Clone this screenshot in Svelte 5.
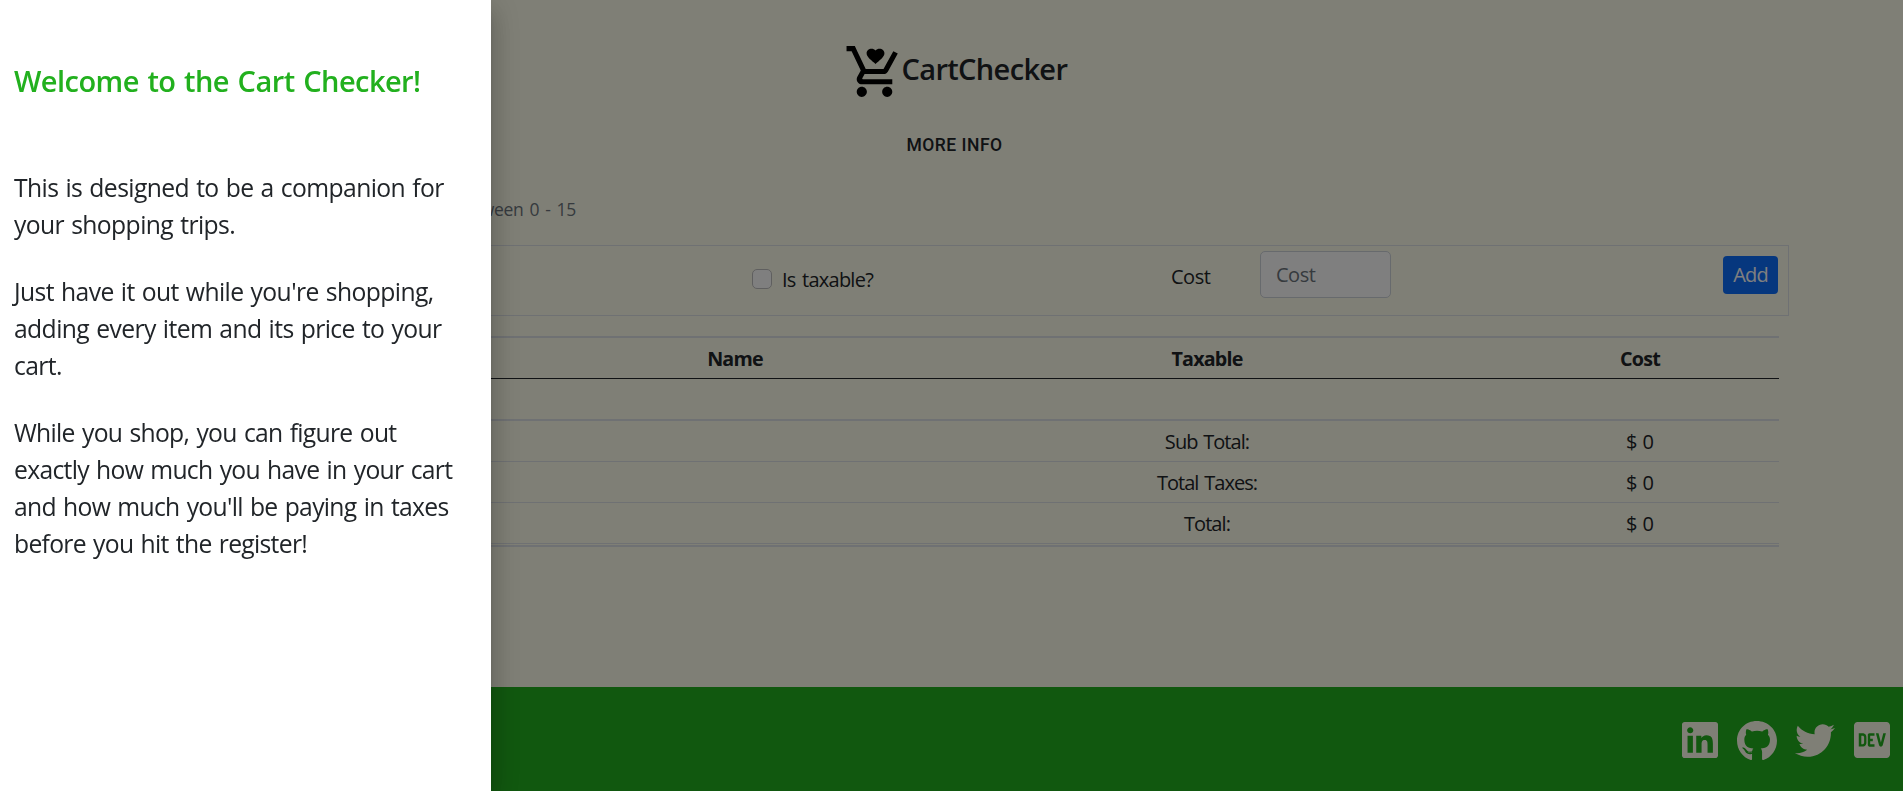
<script>
  const totals = [
    { label: 'Sub Total:', value: '$ 0' },
    { label: 'Total Taxes:', value: '$ 0' },
    { label: 'Total:', value: '$ 0' }
  ];
</script>

<div class="page">
  <header>
    <div class="brand">
      <svg class="cart" viewBox="0 0 24 24"><path d="M7 18c-1.1 0-1.99.9-1.99 2S5.9 22 7 22s2-.9 2-2-.9-2-2-2zm10 0c-1.1 0-1.99.9-1.99 2s.89 2 1.99 2 2-.9 2-2-.9-2-2-2zm-9.83-3.25l.03-.12.9-1.63h7.45c.75 0 1.41-.41 1.75-1.03l3.86-7.01L19.42 4h-.01l-1.1 2-2.76 5H8.53l-.13-.27L6.16 6l-.95-2-.94-2H1v2h2l3.6 7.59-1.35 2.45c-.16.28-.25.61-.25.96 0 1.1.9 2 2 2h12v-2H7.42c-.13 0-.25-.11-.25-.25z" /><path transform="translate(8.2 2.07) scale(.35 .325)" d="M12 21.35l-1.45-1.32C5.4 15.36 2 12.28 2 8.5 2 5.42 4.42 3 7.5 3c1.74 0 3.41.81 4.5 2.09C13.09 3.81 14.76 3 16.5 3 19.58 3 22 5.42 22 8.5c0 3.78-3.4 6.86-8.55 11.54L12 21.35z" /></svg>
      <span class="name">CartChecker</span>
    </div>
    <button class="more">MORE INFO</button>
  </header>
  <p class="hint">between 0 - 15</p>

  <form class="entry">
    <label class="check"><input type="checkbox" /><span>Is taxable?</span></label>
    <label class="costlabel" for="cost">Cost</label>
    <input id="cost" class="cost" placeholder="Cost" />
    <button class="add" type="button">Add</button>
  </form>

  <div class="table">
    <div class="row head"><span></span><b>Name</b><b>Taxable</b><b>Cost</b></div>
    <div class="row blank"></div>
    {#each totals as t}
      <div class="row"><span></span><span></span><span class="label">{t.label}</span><span>{t.value}</span></div>
    {/each}
  </div>

  <footer>
    <svg class="sq" viewBox="0 32 448 448"><path d="M416 32H31.9C14.3 32 0 46.5 0 64.3v383.4C0 465.5 14.3 480 31.9 480H416c17.6 0 32-14.5 32-32.3V64.3c0-17.8-14.4-32.3-32-32.3zM135.4 416H69V202.2h66.5V416zm-33.2-243c-21.3 0-38.5-17.3-38.5-38.5S80.9 96 102.2 96c21.2 0 38.5 17.3 38.5 38.5 0 21.3-17.2 38.5-38.5 38.5zm282.1 243h-66.4V312c0-24.8-.5-56.7-34.5-56.7-34.6 0-39.9 27-39.9 54.9V416h-66.4V202.2h63.7v29.2h.9c8.9-16.8 30.6-34.5 62.9-34.5 67.2 0 79.7 44.3 79.7 101.9V416z" /></svg>
    <svg class="gh" viewBox="0 8 496 484"><path d="M165.9 397.4c0 2-2.3 3.6-5.2 3.6-3.3.3-5.6-1.3-5.6-3.6 0-2 2.3-3.6 5.2-3.6 3-.3 5.6 1.3 5.6 3.6zm-31.1-4.5c-.7 2 1.3 4.3 4.3 4.9 2.6 1 5.6 0 6.2-2s-1.3-4.3-4.3-5.2c-2.6-.7-5.5.3-6.2 2.3zm44.2-1.7c-2.9.7-4.9 2.6-4.6 4.9.3 2 2.9 3.3 5.9 2.6 2.9-.7 4.9-2.6 4.6-4.6-.3-1.9-3-3.2-5.9-2.9zM244.8 8C106.1 8 0 113.3 0 252c0 110.9 69.8 205.8 169.5 239.2 12.8 2.3 17.3-5.6 17.3-12.1 0-6.2-.3-40.4-.3-61.4 0 0-70 15-84.7-29.8 0 0-11.4-29.1-27.8-36.6 0 0-22.9-15.7 1.6-15.4 0 0 24.9 2 38.6 25.8 21.9 38.6 58.6 27.5 72.9 20.9 2.3-16 8.8-27.1 16-33.7-55.9-6.2-112.3-14.3-112.3-110.5 0-27.5 7.6-41.3 23.6-58.9-2.6-6.5-11.1-33.3 2.6-67.9 20.9-6.5 69 27 69 27 20-5.6 41.5-8.5 62.8-8.5s42.8 2.9 62.8 8.5c0 0 48.1-33.6 69-27 13.7 34.7 5.2 61.4 2.6 67.9 16 17.7 25.8 31.5 25.8 58.9 0 96.5-58.9 104.2-114.8 110.5 9.2 7.9 17 22.9 17 46.4 0 33.7-.3 75.4-.3 83.6 0 6.5 4.6 14.4 17.3 12.1C428.2 457.8 496 362.9 496 252 496 113.3 383.5 8 244.8 8z" /></svg>
    <svg class="tw" viewBox="0 48 512 416"><path d="M459.37 151.716c.325 4.548.325 9.097.325 13.645 0 138.72-105.583 298.558-298.558 298.558-59.452 0-114.68-17.219-161.137-47.106 8.447.974 16.568 1.299 25.34 1.299 49.055 0 94.213-16.568 130.274-44.832-46.132-.975-84.792-31.188-98.112-72.772 6.498.974 12.995 1.624 19.818 1.624 9.421 0 18.843-1.3 27.614-3.573-48.081-9.747-84.143-51.98-84.143-102.985v-1.299c13.969 7.797 30.214 12.67 47.431 13.319-28.264-18.843-46.781-51.005-46.781-87.391 0-19.492 5.197-37.36 14.294-52.954 51.655 63.675 129.3 105.258 216.365 109.807-1.624-7.797-2.599-15.918-2.599-24.04 0-57.828 46.782-104.934 104.934-104.934 30.213 0 57.502 12.67 76.67 33.137 23.715-4.548 46.456-13.32 66.599-25.34-7.798 24.366-24.366 44.833-46.132 57.827 21.117-2.273 41.584-8.122 60.426-16.243-14.292 20.791-32.161 39.308-52.628 54.253z" /></svg>
    <svg class="sq" viewBox="0 32 448 448"><path d="M120.12 208.29c-3.88-2.9-7.77-4.35-11.65-4.35H91.03v104.47h17.45c3.88 0 7.77-1.45 11.65-4.35 3.88-2.9 5.82-7.25 5.82-13.06v-69.65c-.01-5.8-1.96-10.16-5.83-13.06zM404.1 32H43.9C19.7 32 .06 51.59 0 75.8v360.4C.06 460.41 19.7 480 43.9 480h360.2c24.21 0 43.84-19.59 43.9-43.8V75.8c-.06-24.21-19.7-43.8-43.9-43.8zM154.2 291.19c0 18.81-11.61 47.31-48.36 47.25h-46.4V172.98h47.38c35.44 0 47.36 28.46 47.37 47.28l.01 70.93zm100.68-88.66H201.6v38.42h32.57v29.57H201.6v38.41h53.29v29.57h-62.18c-11.16.29-20.44-8.53-20.72-19.69V193.7c-.27-11.15 8.56-20.41 19.71-20.69h63.19l-.01 29.52zm103.64 115.29c-13.2 30.75-36.85 24.63-47.44 0l-38.53-144.8h32.57l29.71 113.72 29.57-113.72h32.58l-38.46 144.8z" /></svg>
  </footer>
</div>

<div class="backdrop"></div>

<aside class="drawer">
  <h2>Welcome to the Cart Checker!</h2>
  <p>This is designed to be a companion for<br />your shopping trips.</p>
  <p>Just have it out while you're shopping,<br />adding every item and its price to your<br />cart.</p>
  <p class="last">While you shop, you can figure out<br />exactly how much you have in your cart<br />and how much you'll be paying in taxes<br />before you hit the register!</p>
</aside>

<style>
  :global(body) { margin: 0; overflow: hidden; }
  .page, .drawer { font-family: 'Open Sans', 'Noto Sans', sans-serif; color: #212529; box-sizing: border-box; }
  .page { height: 791px; background: #fffeec; display: flex; flex-direction: column; font-size: 20px; line-height: 30px; letter-spacing: -.5px; }
  header { display: flex; flex-direction: column; align-items: center; padding-top: 41px; }
  .brand { display: flex; align-items: center; width: 225px; height: 61px; margin-left: 9px; }
  .cart { flex: none; width: 61px; height: 61px; fill: #000; }
  .name { font-size: 29px; font-weight: 600; line-height: 36px; margin: -5px 0 0 -3px; letter-spacing: -.65px; }
  button { border: 0; padding: 0; background: none; color: inherit; font: inherit; }
  .more { margin: 28px 0 0 6px; height: 30px; font: 500 17.5px/30px Roboto, sans-serif; letter-spacing: .5px; }
  .hint { margin: 34px 0 1px; width: 576px; height: 30px; line-height: 30px; font-size: 17.5px; color: #6c757d; text-align: right; letter-spacing: -.3px; word-spacing: 1.8px; }
  .entry { display: flex; align-items: flex-start; box-sizing: border-box; width: 1675px; height: 71px; margin: 20px 0 0 114px; border: 1px solid #dee2e6; }
  .check { display: flex; margin: 23px 0 0 637px; width: 419px; }
  .check span { margin: -4px 0 0 10px; letter-spacing: -.75px; word-spacing: 2px; }
  .check input { appearance: none; box-sizing: border-box; width: 20px; height: 20px; margin: 0; border: 1px solid #bfbfbf; border-radius: 5px; background: #fff; }
  .costlabel { margin-top: 16px; width: 89px; }
  .cost { box-sizing: border-box; width: 131px; height: 47px; margin: 5px 0 0; padding: 0 15px; border: 1px solid #ced4da; border-radius: 5px; background: #fff; font: inherit; letter-spacing: -.5px; }
  .cost::placeholder { color: #6c757d; opacity: 1; }
  .add { margin: 10px 10px 0 auto; width: 55px; height: 38px; border-radius: 4px; background: #0d6efd; color: #fff; letter-spacing: -.8px; }
  .table { width: 1655px; margin: 20px 0 0 124px; border-top: 2px solid #dee2e6; border-bottom: 2px solid #dee2e6; padding-bottom: 1px; }
  .row { display: grid; grid-template-columns: 433px 356px 588px 278px; text-align: center; height: 40px; line-height: 42px; border-bottom: 1px solid #dee2e6; letter-spacing: -.1px; }
  .label { letter-spacing: -.95px; word-spacing: 1.5px; }
  .head { border-bottom-color: #212529; letter-spacing: -.8px; font-size: 19.7px; }
  .blank { border-bottom-width: 2px; }
  footer { margin-top: auto; height: 104px; box-sizing: border-box; background: #22b01e; display: flex; align-items: center; justify-content: flex-end; padding: 2px 13px 0 0; fill: #fffeec; }
  .sq { width: 36px; height: 36px; }
  .gh { width: 40px; height: 39px; margin: 0 18px 0 19px; }
  .tw { width: 40px; height: 33px; margin-right: 19px; }
  .backdrop { position: fixed; inset: 0; background: rgba(0, 0, 0, .5); }
  .drawer { position: fixed; top: 0; left: 0; bottom: 0; width: 491px; background: #fff; padding: 62px 14px; white-space: nowrap; font-size: 24.7px; line-height: 37px; letter-spacing: -.6px; word-spacing: 1.3px; box-shadow: 0 8px 10px -5px rgba(0,0,0,.2), 0 16px 24px 2px rgba(0,0,0,.14), 0 6px 30px 5px rgba(0,0,0,.12); }
  h2 { margin: 0 0 70px; font-size: 29px; line-height: 37px; font-weight: 600; letter-spacing: -.55px; word-spacing: 1.6px; color: #22b01e; }
  p { margin: 0 0 30px; }
  .last { letter-spacing: -.7px; word-spacing: 1.5px; }
</style>
